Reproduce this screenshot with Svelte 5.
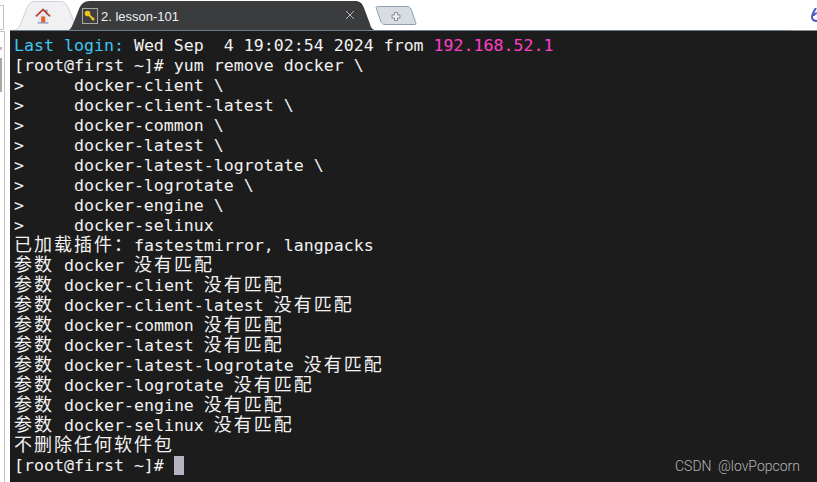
<script>
  const lines = [
    [['Last login: ', 'cyan'], ['Wed Sep  4 19:02:54 2024 from ', ''], ['192.168.52.1', 'pink']],
    [['[root@first ~]# yum remove docker \\', '']],
    [['>     docker-client \\', '']],
    [['>     docker-client-latest \\', '']],
    [['>     docker-common \\', '']],
    [['>     docker-latest \\', '']],
    [['>     docker-latest-logrotate \\', '']],
    [['>     docker-logrotate \\', '']],
    [['>     docker-engine \\', '']],
    [['>     docker-selinux', '']],
    [['已加载插件：', 'cjk'], ['fastestmirror, langpacks', '']],
    [['参数', 'cjk'], [' docker ', ''], ['没有匹配', 'cjk']],
    [['参数', 'cjk'], [' docker-client ', ''], ['没有匹配', 'cjk']],
    [['参数', 'cjk'], [' docker-client-latest ', ''], ['没有匹配', 'cjk']],
    [['参数', 'cjk'], [' docker-common ', ''], ['没有匹配', 'cjk']],
    [['参数', 'cjk'], [' docker-latest ', ''], ['没有匹配', 'cjk']],
    [['参数', 'cjk'], [' docker-latest-logrotate ', ''], ['没有匹配', 'cjk']],
    [['参数', 'cjk'], [' docker-logrotate ', ''], ['没有匹配', 'cjk']],
    [['参数', 'cjk'], [' docker-engine ', ''], ['没有匹配', 'cjk']],
    [['参数', 'cjk'], [' docker-selinux ', ''], ['没有匹配', 'cjk']],
    [['不删除任何软件包', 'cjk']],
    [['[root@first ~]# ', ''], ['', 'cursor']],
  ];
</script>

<div class="window">
  <div class="tabbar">
    <div class="gutter">
      <span class="stub"></span>
    </div>

    <div class="tab home">
      <svg class="shape" width="62" height="31" viewBox="0 0 62 31">
        <path d="M0 30.500 C4 30 6 28 8 23 L14 8 C16 3 18 1.500 23 1.500 L47 1.500 C51 1.500 53 3 55 7 L61 22 L61 31 L0 31 Z" fill="#f1f1f3" stroke="#cfd1d6" />
      </svg>
      <svg class="house" width="16" height="16" viewBox="0 0 18 18">
        <path d="M3.500 8.500 L3.500 16.500 L14.500 16.500 L14.500 8.500 L9 3.500 Z" fill="#e9e6ee" />
        <rect x="11.500" y="2" width="2.500" height="4" fill="#8b8fc9" />
        <path d="M1 9.500 L9 1.800 L17 9.500" fill="none" stroke="#b5453a" stroke-width="2" />
        <rect x="7" y="9.500" width="4.500" height="7" fill="#e2622a" />
        <rect x="3" y="16" width="12" height="1.500" fill="#8d97c6" />
      </svg>
    </div>

    <div class="tab active">
      <svg class="shape" width="310" height="31" viewBox="0 0 310 31">
        <path d="M0 31 C3 30 4 28 6 24 L12 9 C14 4 17 1 23 1 L288 1 C293 1 295 3 297 8 L303 24 C304 28 306 30 310 31 Z" fill="#3b3c3e" />
      </svg>
      <span class="key">
        <svg width="16" height="16" viewBox="0 0 16 16">
          <rect x="0.500" y="0.500" width="15" height="15" fill="#3f3f3f" stroke="#a8a8a8" />
          <circle cx="5.500" cy="5.500" r="2.800" fill="#f3c21b" />
          <path d="M6.500 6.500 L12 12 M10 12 L12 10" stroke="#f3c21b" stroke-width="2" />
        </svg>
      </span>
      <span class="title">2. lesson-101</span>
      <svg class="close" width="10" height="10" viewBox="0 0 10 10">
        <path d="M1 1 L9 9 M9 1 L1 9" stroke="#b9b9b9" fill="none" />
      </svg>
    </div>

    <div class="tab add">
      <svg class="shape" width="42" height="19" viewBox="0 0 42 19">
        <path d="M1 1.500 C1 1 2 .500 3 .500 L32 .500 C34 .500 35 1.500 36 3 L41 17.500 C41 18 40.500 18.500 40 18.500 L10 18.500 C8 18.500 7 17.500 6 16 Z" fill="#d8dde4" stroke="#8e9fb2" />
        <path d="M19.500 6.500 h3 v2.500 h2.500 v3 h-2.500 v2.500 h-3 v-2.500 h-2.500 v-3 h2.500 Z" fill="#f0f1f3" stroke="#8b8d91" />
      </svg>
    </div>

    <svg class="edge" width="6" height="14" viewBox="0 0 6 14">
      <path d="M5 0 C3 3 1 6 1 9 C1 12 3 13 6 13" fill="none" stroke="#4c5bc4" stroke-width="2" />
      <path d="M2.500 8 C3.500 5.500 5 5 6 5.500" fill="none" stroke="#4c5bc4" stroke-width="2" />
    </svg>
  </div>

  <div class="body">
    <div class="gutter side">
      <span class="rail">
        <span class="tick"></span>
        <span class="thumb"></span>
      </span>
    </div>
    <div class="term">
      {#each lines as line}
        <div class="line">{#each line as [text, tone]}{#if tone === 'cursor'}<span class="cursor"></span>{:else}<span class={tone}>{text}</span>{/if}{/each}</div>
      {/each}
      <span class="mark">CSDN @lovPopcorn</span>
    </div>
  </div>
</div>

<style>
  :global(body) {
    margin: 0;
    background: #fff;
  }

  .window {
    width: 817px;
    height: 482px;
    overflow: hidden;
    display: flex;
    flex-direction: column;
  }

  .tabbar {
    height: 30px;
    display: flex;
    align-items: flex-start;
    background: #fff;
    position: relative;
  }

  .gutter {
    width: 10px;
    flex: none;
    display: flex;
    flex-direction: column;
  }

  .stub {
    display: block;
    width: 3px;
    height: 23px;
    margin-top: 5px;
    border: 1px solid #c4c4c4;
    border-left: none;
  }

  .tab {
    position: relative;
    flex: none;
  }

  .shape {
    position: absolute;
    left: 0;
    top: 0;
  }

  .home {
    width: 60px;
    height: 31px;
    margin-left: 3px;
  }

  .house {
    position: absolute;
    left: 22px;
    top: 8px;
  }

  .active {
    width: 310px;
    height: 31px;
    margin-left: -6px;
    display: flex;
    align-items: center;
    color: #f0f0f0;
    font: 13px "Liberation Sans", Arial, sans-serif;
  }

  .key {
    position: relative;
    margin-left: 15px;
    margin-top: 1px;
    height: 16px;
  }

  .title {
    position: relative;
    margin-left: 3px;
    margin-top: 1px;
  }

  .close {
    position: absolute;
    left: 278px;
    top: 10px;
  }

  .add {
    width: 42px;
    height: 19px;
    margin-left: -2px;
    margin-top: 6px;
  }

  .edge {
    position: absolute;
    right: 0;
    top: 8px;
  }

  .body {
    flex: 1;
    display: flex;
    min-height: 0;
    background: #fff;
  }

  .rail {
    flex: 1;
    width: 4px;
    margin-top: 1px;
    border-top: 1px solid #c4c4c4;
    border-right: 1px solid #c4c4c4;
    display: flex;
    flex-direction: column;
  }

  .tick {
    width: 2px;
    height: 3px;
    margin-top: 15px;
    background: #bdbdbd;
  }

  .thumb {
    width: 2px;
    height: 34px;
    margin-top: 8px;
    background: #a9a9a9;
  }

  .term {
    flex: 1;
    position: relative;
    background: #1c1c1c;
    border-top: 1px solid;
    border-image: linear-gradient(90deg, #6d8193 780px, #8f8f8f 780px) 1;
    padding: 5px 0 0 4px;
    color: #f2f2f2;
    font-family: "DejaVu Sans Mono", "Noto Sans CJK SC", monospace;
    font-size: 16.6px;
    line-height: 20px;
  }

  .line {
    height: 20px;
    white-space: pre;
  }

  .cyan {
    color: #3fc6f0;
  }

  .pink {
    color: #ff3fc8;
  }

  .cjk {
    font-family: "Liberation Mono", "Noto Sans CJK SC", monospace;
    font-size: 18px;
    letter-spacing: 2px;
  }

  .cursor {
    display: inline-block;
    width: 10px;
    height: 19px;
    vertical-align: -4px;
    background: #b4b4c0;
  }

  .mark {
    position: absolute;
    right: 17px;
    bottom: 8px;
    color: #b5b5b5;
    font: 300 14px Roboto, "Liberation Sans", sans-serif;
    word-spacing: 3px;
  }
</style>
